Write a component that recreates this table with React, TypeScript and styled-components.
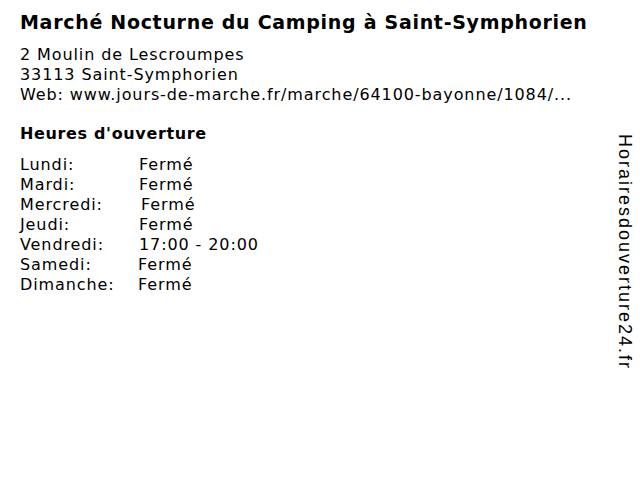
import React from "react";
import styled, { createGlobalStyle } from "styled-components";

const Global = createGlobalStyle`
  html, body { margin: 0; padding: 0; background: #fff; }
  body { width: 640px; height: 480px; overflow: hidden; }
`;

const Page = styled.div`
  display: flex;
  width: 640px;
  height: 480px;
  box-sizing: border-box;
  padding: 10px 5px 0 20px;
  font-family: "DejaVu Sans", Verdana, sans-serif;
  color: #000;
`;

const Main = styled.div`
  flex: 1;
  display: flex;
  flex-direction: column;
`;

const Title = styled.h1`
  margin: 0;
  font-size: 19px;
  letter-spacing: 0.7px;
  font-weight: bold;
  line-height: 24px;
`;

const Address = styled.div`
  margin-top: 11px;
  font-size: 16px;
  letter-spacing: 0.9px;
  line-height: 20px;
`;

const Heading = styled.h2`
  margin: 19px 0 0;
  font-size: 16px;
  letter-spacing: 0.65px;
  font-weight: bold;
  line-height: 20px;
`;

const Hours = styled.div`
  margin-top: 11px;
  display: grid;
  grid-template-columns: 119px auto;
  font-size: 16px;
  letter-spacing: 0.9px;
  line-height: 20px;
  justify-content: start;
`;

const Day = styled.span``;

const Time = styled.span<{ $shift: number }>`
  margin-left: ${(p) => p.$shift}px;
`;

const Side = styled.div`
  writing-mode: vertical-rl;
  font-family: "Liberation Sans", Arial, sans-serif;
  font-size: 18px;
  letter-spacing: 2px;
  padding-top: 124px;
  line-height: 20px;
`;

const rows: [string, string, number][] = [
  ["Lundi:", "Fermé", 0],
  ["Mardi:", "Fermé", 0],
  ["Mercredi:", "Fermé", 2],
  ["Jeudi:", "Fermé", 0],
  ["Vendredi:", "17:00 - 20:00", 0],
  ["Samedi:", "Fermé", -1],
  ["Dimanche:", "Fermé", -1],
];

export default function App() {
  return (
    <>
      <Global />
      <Page>
        <Main>
          <Title>Marché Nocturne du Camping à Saint-Symphorien</Title>
          <Address>
            2 Moulin de Lescroumpes
            <br />
            33113 Saint-Symphorien
            <br />
            Web: www.jours-de-marche.fr/marche/64100-bayonne/1084/...
          </Address>
          <Heading>Heures d'ouverture</Heading>
          <Hours>
            {rows.map(([d, t, s]) => (
              <React.Fragment key={d}>
                <Day>{d}</Day>
                <Time $shift={s}>{t}</Time>
              </React.Fragment>
            ))}
          </Hours>
        </Main>
        <Side>Horairesdouverture24.fr</Side>
      </Page>
    </>
  );
}
